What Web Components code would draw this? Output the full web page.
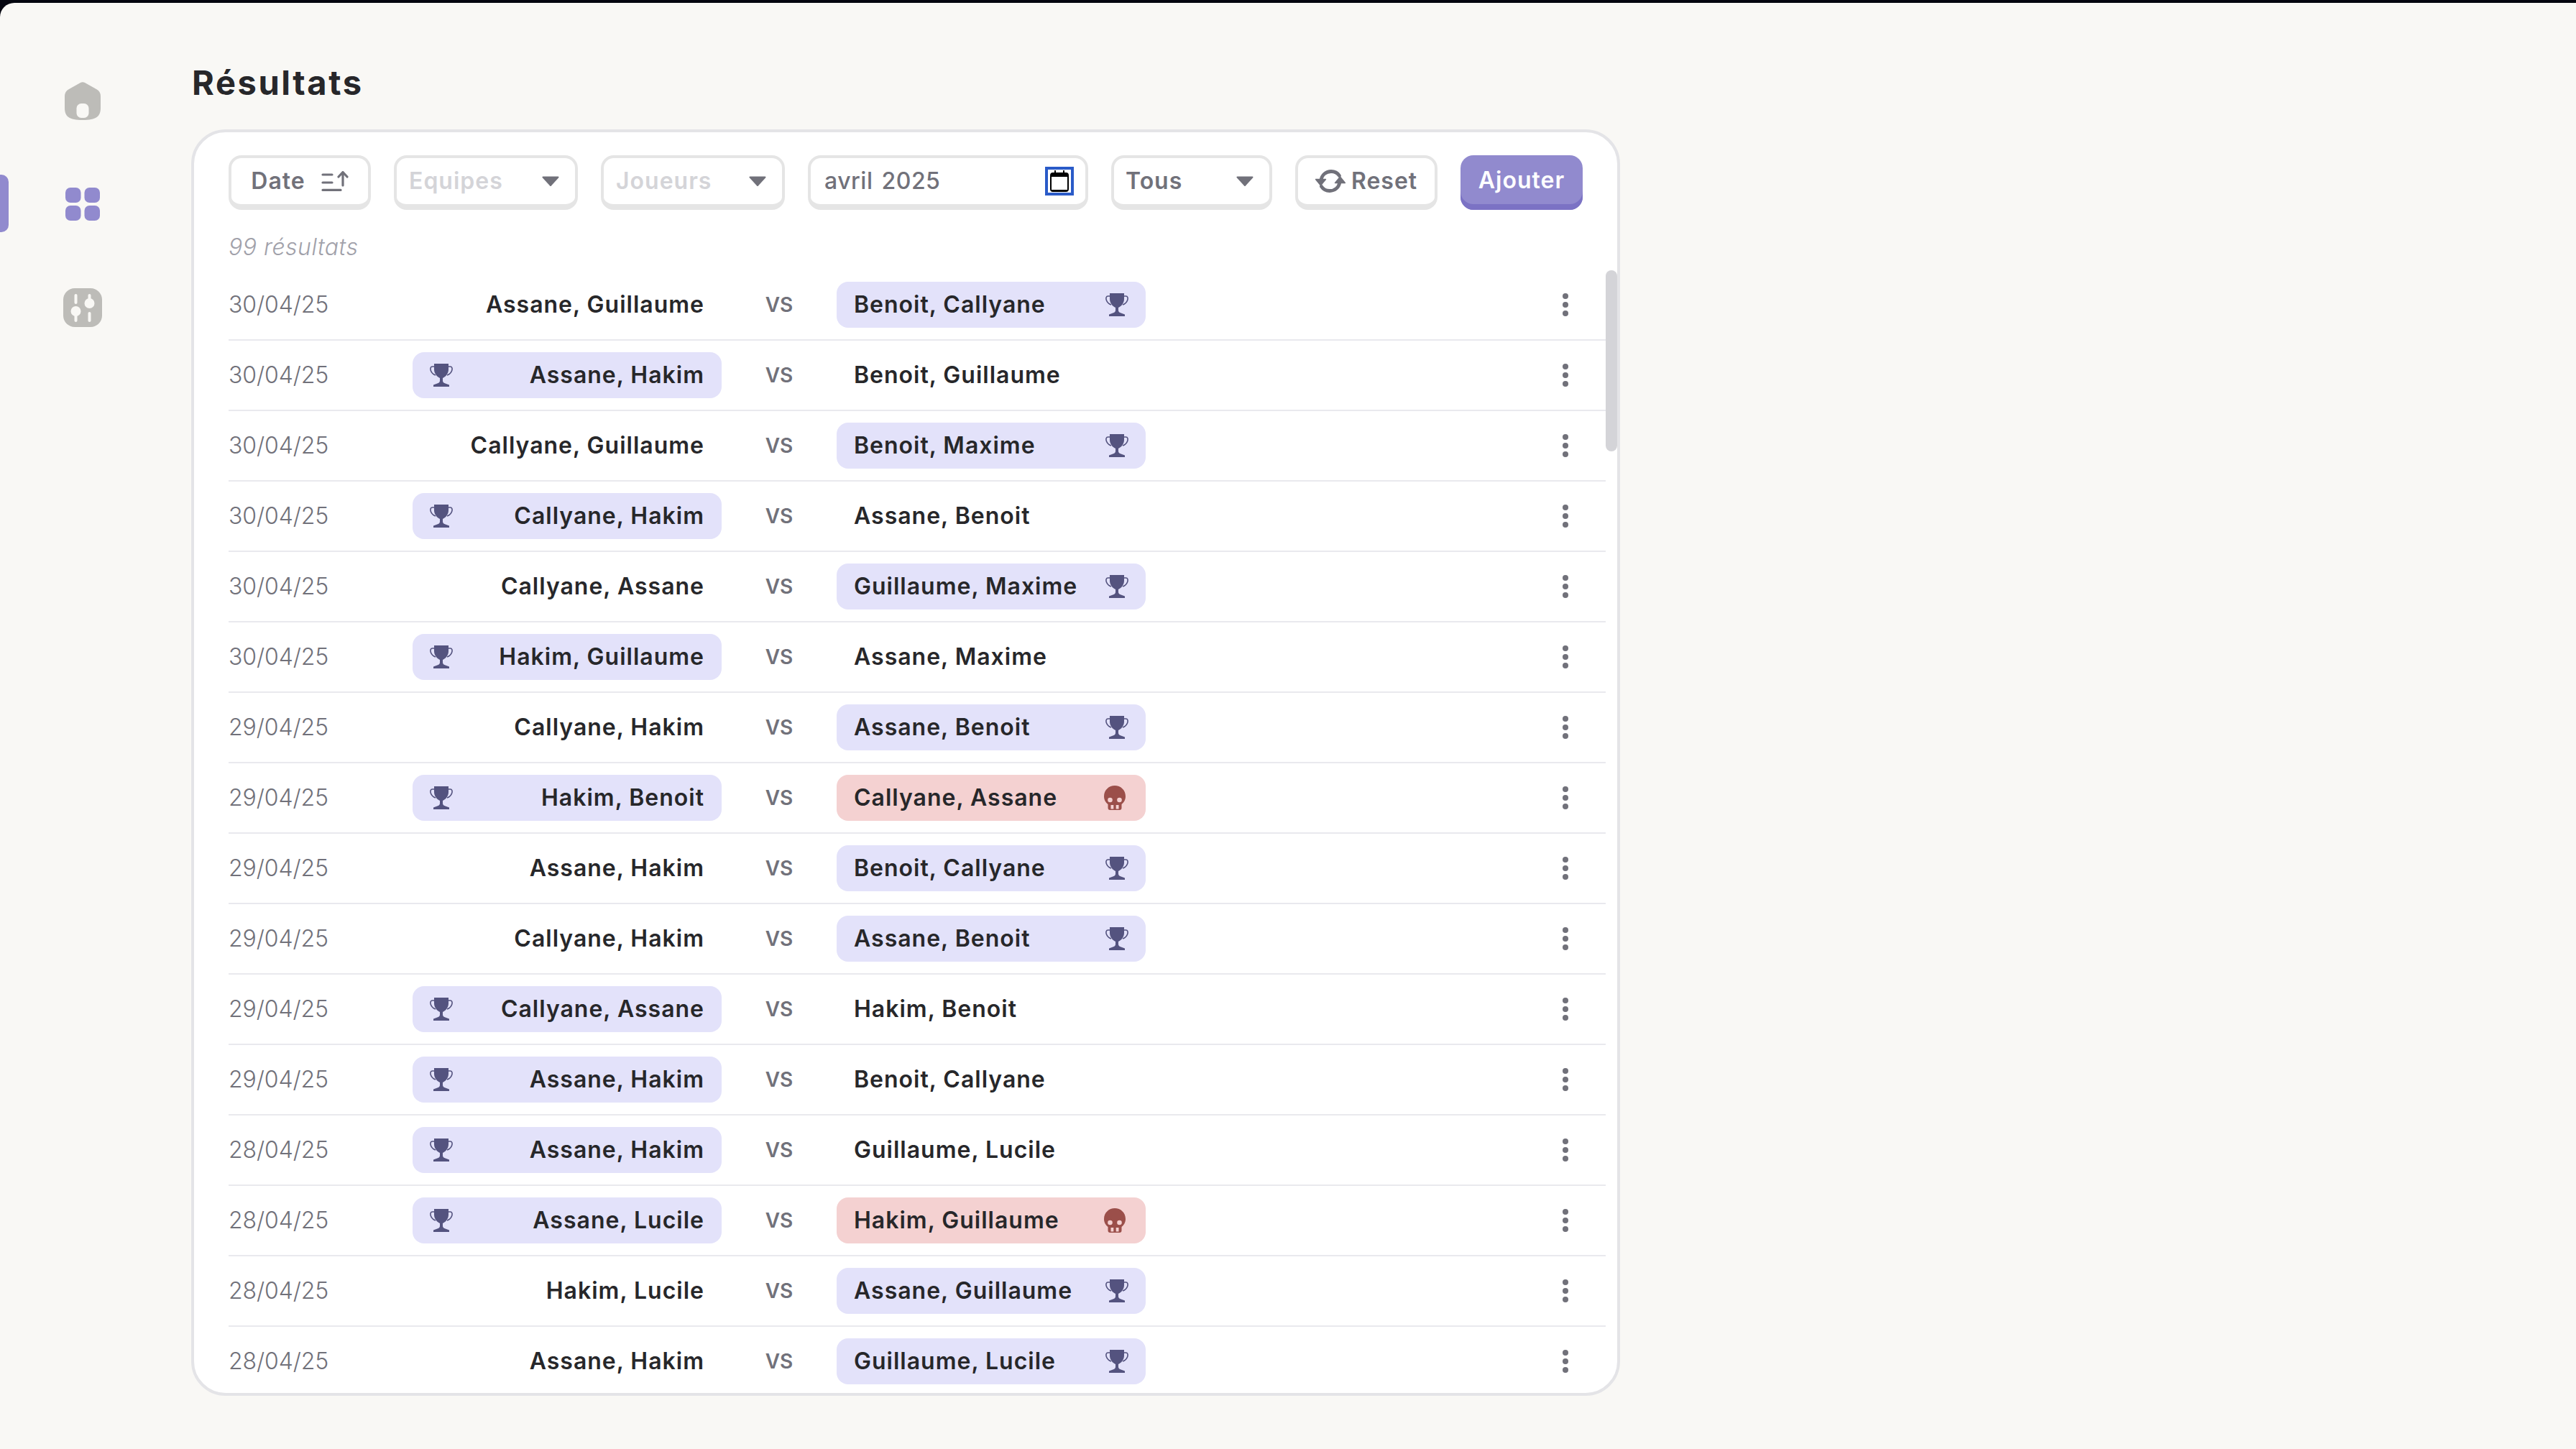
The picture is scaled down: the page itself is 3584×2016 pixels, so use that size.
<!DOCTYPE html>
<html lang="fr"><head><meta charset="utf-8"><title>Résultats</title>
<style>
html,body{margin:0;height:100%;background:#05060f;overflow:hidden}
body{font-family:Inter,"Liberation Sans",sans-serif}
</style></head><body>
<app-shell>
  <side-rail slot="rail"></side-rail>
  <results-panel slot="main">
    <filter-btn>Date<svg slot="icon" width="38" height="28" viewBox="0 0 38 28" fill="none" stroke="#71717a" stroke-width="3.2" stroke-linecap="round"><path d="M2 5H15M2 16H15M2 26.4H27"/><path d="M30 20V2M24 8L30 1.5 36 8" stroke-linejoin="round"/></svg></filter-btn>
    <filter-select w="256" muted>Equipes</filter-select>
    <filter-select w="256" muted>Joueurs</filter-select>
    <month-field>avril 2025</month-field>
    <filter-select w="224">Tous</filter-select>
    <filter-btn reset><svg slot="lead" width="42" height="32" viewBox="0 0 42 32" fill="none" stroke="#71717a" stroke-width="4.8" stroke-linecap="round"><path d="M8 15C9 7 15 2.500 22 2.500C27 2.500 31 4.600 33.500 8.500"/><path d="M34 17C33 25 27 29.500 20 29.500C15 29.500 11 27.400 8.500 23.500"/><path d="M0.500 13.500H14.500L7.500 22Z" fill="#71717a" stroke-width="1.400" stroke-linejoin="round"/><path d="M27.500 18.500H41.500L34.500 10Z" fill="#71717a" stroke-width="1.400" stroke-linejoin="round"/></svg>Reset</filter-btn>
    <primary-btn>Ajouter</primary-btn>
    <match-row slot="rows" date="30/04/25" a="Assane, Guillaume" b="Benoit, Callyane" r="win"></match-row>
    <match-row slot="rows" date="30/04/25" a="Assane, Hakim" b="Benoit, Guillaume" l="win"></match-row>
    <match-row slot="rows" date="30/04/25" a="Callyane, Guillaume" b="Benoit, Maxime" r="win"></match-row>
    <match-row slot="rows" date="30/04/25" a="Callyane, Hakim" b="Assane, Benoit" l="win"></match-row>
    <match-row slot="rows" date="30/04/25" a="Callyane, Assane" b="Guillaume, Maxime" r="win"></match-row>
    <match-row slot="rows" date="30/04/25" a="Hakim, Guillaume" b="Assane, Maxime" l="win"></match-row>
    <match-row slot="rows" date="29/04/25" a="Callyane, Hakim" b="Assane, Benoit" r="win"></match-row>
    <match-row slot="rows" date="29/04/25" a="Hakim, Benoit" b="Callyane, Assane" l="win" r="lose"></match-row>
    <match-row slot="rows" date="29/04/25" a="Assane, Hakim" b="Benoit, Callyane" r="win"></match-row>
    <match-row slot="rows" date="29/04/25" a="Callyane, Hakim" b="Assane, Benoit" r="win"></match-row>
    <match-row slot="rows" date="29/04/25" a="Callyane, Assane" b="Hakim, Benoit" l="win"></match-row>
    <match-row slot="rows" date="29/04/25" a="Assane, Hakim" b="Benoit, Callyane" l="win"></match-row>
    <match-row slot="rows" date="28/04/25" a="Assane, Hakim" b="Guillaume, Lucile" l="win"></match-row>
    <match-row slot="rows" date="28/04/25" a="Assane, Lucile" b="Hakim, Guillaume" l="win" r="lose"></match-row>
    <match-row slot="rows" date="28/04/25" a="Hakim, Lucile" b="Assane, Guillaume" r="win"></match-row>
    <match-row slot="rows" date="28/04/25" a="Assane, Hakim" b="Guillaume, Lucile" r="win"></match-row>
  </results-panel>
</app-shell>
<script>
const FONT='Inter,"Liberation Sans",sans-serif';
function def(name,html){
  customElements.define(name,class extends HTMLElement{
    connectedCallback(){
      if(this.shadowRoot)return;
      this.attachShadow({mode:'open'}).innerHTML=typeof html==='function'?html(this):html;
    }
  });
}
def('app-shell',`<style>
:host{display:block;height:2016px;box-sizing:border-box;padding-top:4px}
.page{display:flex;height:2012px;background:#f9f8f5;border-top-left-radius:20px;overflow:hidden}
.rail{flex:0 0 266px}.main{flex:1;min-width:0}
</style><div class="page"><div class="rail"><slot name="rail"></slot></div><div class="main"><slot name="main"></slot></div></div>`);

def('side-rail',`<style>
:host{display:flex;flex-direction:column;gap:64px;padding-top:96px}
.item{width:230px;height:80px;display:flex;align-items:center;justify-content:center;position:relative}
.bar{position:absolute;left:0;top:-1px;width:12px;height:80px;background:#918ace;border-radius:0 10px 10px 0}
svg{display:block}
</style>
<div class="item"><svg width="50" height="53" viewBox="0 0 50 53"><path fill="#bdbcb8" d="M22 1Q25 -.5 28 1L44 10Q50 13 50 20V36C50 48 44 53 25 53C6 53 0 48 0 36V20Q0 13 6 10Z"/><rect x="16.500" y="30" width="17" height="20" rx="6.500" fill="#f9f8f5"/></svg></div>
<div class="item"><span class="bar"></span><svg width="48" height="46" viewBox="0 0 48 46"><g fill="#918ace"><rect width="21.500" height="21" rx="7"/><rect x="26.500" width="21.500" height="21" rx="7"/><rect y="25" width="21.500" height="21" rx="7"/><rect x="26.500" y="25" width="21.500" height="21" rx="7"/></g></svg></div>
<div class="item"><svg width="54" height="54" viewBox="0 0 54 54"><rect width="54" height="54" rx="16" fill="#bdbcb8"/><g fill="#f9f8f5"><rect x="15.500" y="8" width="4" height="14" rx="2"/><circle cx="17.500" cy="32" r="7"/><rect x="15.500" y="34" width="4" height="13" rx="2"/><rect x="34.500" y="8" width="4" height="12" rx="2"/><circle cx="36.500" cy="21" r="7"/><rect x="34.500" y="33" width="4" height="14" rx="2"/></g></svg></div>`);

def('results-panel',`<style>
:host{display:block}
h1{margin:0;height:176px;box-sizing:border-box;padding:85px 0 0 1px;font:700 47px/52px ${FONT};color:#27272a;letter-spacing:2.600px}
.card{box-sizing:border-box;width:1988px;height:1762px;background:#fff;border:4px solid #e4e4e7;border-radius:48px;position:relative;overflow:hidden;display:flex;flex-direction:column}
.bar{display:flex;gap:32px;padding:32px 48px 0}
.count{padding:32px 48px 12px;font:italic 300 32px/40px ${FONT};color:#a1a1aa;letter-spacing:.5px}
.rows{flex:1;min-height:0;overflow:hidden;margin:0 16px 0 48px}
.thumb{position:absolute;left:1964px;top:192px;width:16px;height:252px;border-radius:8px;background:#d4d4d8}
</style><h1>Résultats</h1><div class="card"><div class="bar"><slot></slot></div><div class="count">99 résultats</div><div class="rows"><slot name="rows"></slot></div><div class="thumb"></div></div>`);

const ctrl=`:host{display:block;flex:none}
.b{box-sizing:border-box;height:76px;border:4px solid #e5e5e5;border-bottom-width:8px;border-radius:18px;background:#fff;display:flex;align-items:center;font:600 32px/40px ${FONT};letter-spacing:1px;color:#71717a;white-space:nowrap}`;
const caret=`<svg width="24" height="14" viewBox="0 0 24 14"><path fill="#71717a" stroke="#71717a" stroke-width="2" stroke-linejoin="round" d="M1.500 1.500H22.500L12 13Z"/></svg>`;

def('filter-btn',h=>`<style>${ctrl}
.b{width:198px;justify-content:center;gap:${h.hasAttribute('reset')?8:22}px}
::slotted(svg){display:block}
</style><div class="b"><slot name="lead"></slot><span><slot></slot></span><slot name="icon"></slot></div>`);

def('filter-select',h=>`<style>${ctrl}
.b{width:${h.getAttribute('w')}px;justify-content:space-between;padding:0 22px 0 ${h.hasAttribute('muted')?17:16}px;${h.hasAttribute('muted')?'color:#d4d4d8':''}}
svg{display:block}
</style><div class="b"><span><slot></slot></span>${caret}</div>`);

def('month-field',`<style>${ctrl}
.b{width:390px;justify-content:space-between;padding:0 16px 0 19px;letter-spacing:.5px;word-spacing:3px;font-weight:500}
.cal{box-sizing:border-box;width:40px;height:40px;border:4px solid #2a5bc8;display:flex;align-items:center;justify-content:center}
svg{display:block}
</style><div class="b"><span><slot></slot></span><span class="cal"><svg width="26" height="30" viewBox="0 0 26 30"><path fill="#000" d="M6 0H8V3H18V0H20V3H22Q26 3 26 7V26Q26 30 22 30H4Q0 30 0 26V7Q0 3 4 3H6Z"/><rect x="2" y="9" width="22" height="18" fill="#fff"/></svg></span></div>`);

def('primary-btn',`<style>:host{display:block;flex:none}
.b{box-sizing:border-box;width:170px;height:76px;padding-bottom:6px;border-radius:18px;background:#918ace;box-shadow:inset 0 -8px 0 #7b72c4;display:flex;align-items:center;justify-content:center;font:600 32px/40px ${FONT};letter-spacing:1px;color:#fff}
</style><div class="b"><slot></slot></div>`);

const trophy=`<svg width="32" height="32" viewBox="0 0 32 32"><path fill="#54537f" d="M6 0H26V8C26 14 21.500 18.500 18 20V24C18 26 20 27 23 28L27 29.500V32H5V29.500L9 28C12 27 14 26 14 24V20C10.500 18.500 6 14 6 8Z"/><path fill="none" stroke="#54537f" stroke-width="1.600" d="M6 4H3.500C1 4 .5 7 1.300 9.500C2.300 12.500 5 15 8 16M26 4H28.500C31 4 31.500 7 30.700 9.500C29.700 12.500 27 15 24 16"/></svg>`;
const skull=`<svg class="sk" width="30" height="34" viewBox="0 0 30 34"><path fill="#9b4f4a" d="M15 0C7 0 0 6 0 15C0 20 2.500 23.500 5.500 26V31Q5.500 34 8.500 34H21.500Q24.500 34 24.500 31V26C27.500 23.500 30 20 30 15C30 6 23 0 15 0Z"/><g fill="#f4d1d1"><circle cx="8.500" cy="20" r="3.300"/><circle cx="21.500" cy="20" r="3.300"/><rect x="9.500" y="27" width="3.800" height="5.500"/><rect x="16.700" y="27" width="3.800" height="5.500"/></g></svg>`;

def('match-row',h=>{
  const l=h.getAttribute('l'),r=h.getAttribute('r');
  const ic=s=>s==='win'?trophy:s==='lose'?skull:'';
  const cl=s=>s==='lose'?'p lose':s==='win'?'p win':'p';
  return `<style>
:host{display:grid;grid-template-columns:256px 430px 160px 430px 1fr;align-items:center;height:98px;box-sizing:border-box;padding:16px 0;border-bottom:2px solid #e9e9ee}
.d{font:300 32px/40px ${FONT};color:#71717a;letter-spacing:-.1px}
.p{box-sizing:border-box;height:64px;border-radius:16px;display:flex;align-items:center;font:600 32px/40px ${FONT};letter-spacing:1px;color:#27272a;white-space:nowrap;padding:0 24px}
.win{background:#e3e2fa}.lose{background:#f4d1d1}
.p.a span{margin-left:auto}
.p.b{justify-content:space-between}
svg{display:block;flex:none}.sk{margin-right:4px}
.vs{text-align:center;font:600 28px/40px ${FONT};color:#71717a}
.m{justify-self:end;margin-right:52px;display:flex;flex-direction:column;gap:4px}
.m i{width:8px;height:8px;border-radius:50%;background:#71717a}
</style><div class="d">${h.getAttribute('date')}</div>
<div class="${cl(l)} a">${ic(l)}<span>${h.getAttribute('a')}</span></div>
<div class="vs">VS</div>
<div class="${cl(r)} b"><span>${h.getAttribute('b')}</span>${ic(r)}</div>
<div class="m"><i></i><i></i><i></i></div>`;
});
</script>
</body></html>
